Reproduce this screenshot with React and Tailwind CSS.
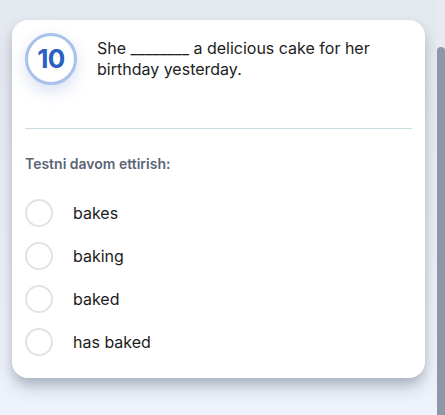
import React from "react";

const options = ["bakes", "baking", "baked", "has baked"];

const App = () => {
  return (
    <div
      className="flex h-[415px] w-[445px] overflow-hidden bg-gradient-to-b from-[#e4e8ef] to-[#eef2fb]"
      style={{ fontFamily: "Inter, 'Liberation Sans', sans-serif" }}
    >
      <div className="flex-1 px-3 pt-5">
        <div className="rounded-2xl bg-white px-[13px] pt-[13px] pb-[22px] shadow-[0_10px_16px_-2px_rgba(70,85,110,0.35),0_4px_8px_rgba(70,85,110,0.12)]">
          {/* Question header */}
          <div className="flex items-start gap-5">
            <div className="flex h-[52px] w-[52px] shrink-0 items-center justify-center rounded-full border-[3px] border-[#a8c2ea] bg-white shadow-[0_6px_16px_rgba(120,150,210,0.3)]">
              <span className="text-[26px] font-bold leading-none tracking-[-0.5px] text-[#2a60c2]">
                10
              </span>
            </div>
            <p className="pt-[5px] text-[16px] leading-[21px] text-[#222222]">
              She ________ a delicious cake for her birthday yesterday.
            </p>
          </div>

          <div className="mt-[43px] h-px bg-[#c8dde2]" />

          <p className="mt-[24px] text-[14px] font-semibold text-[#5b6576]">
            Testni davom ettirish:
          </p>

          {/* Options */}
          <div className="mt-[25px] flex flex-col gap-[15px]">
            {options.map((option) => (
              <label key={option} className="flex items-center gap-5">
                <span className="h-[28px] w-[28px] shrink-0 rounded-full border-2 border-[#e3e3e3] bg-white" />
                <span className="text-[16px] text-[#1c1c1c]">{option}</span>
              </label>
            ))}
          </div>
        </div>
      </div>

      {/* Scrollbar */}
      <div className="flex w-2 flex-col bg-[#e7eaf0] pt-[47px]">
        <div className="flex-1 rounded-t-[4px] bg-[#8c97a7]" />
      </div>
    </div>
  );
};

export default App;
